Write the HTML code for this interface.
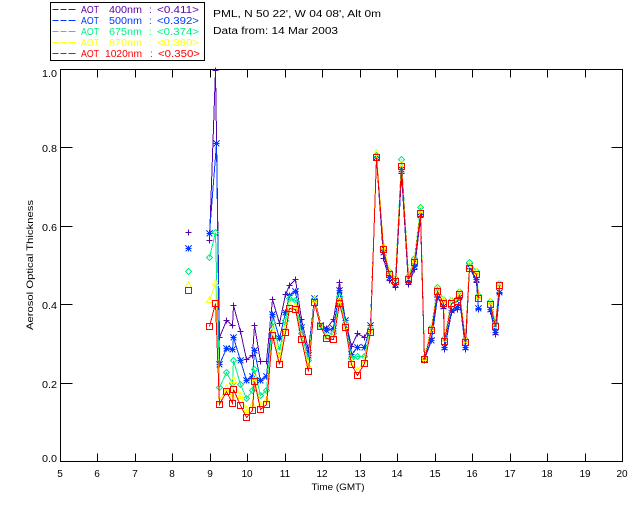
<!DOCTYPE html>
<html><head><meta charset="utf-8">
<style>
html,body{margin:0;padding:0;background:#fff}
svg{display:block;shape-rendering:crispEdges;font-family:"Liberation Sans",sans-serif;font-size:10px}
</style></head>
<body>
<svg width="640" height="512" viewBox="0 0 640 512" xmlns="http://www.w3.org/2000/svg">
<defs>
<marker id="mp" markerUnits="userSpaceOnUse" markerWidth="12" markerHeight="12" refX="6" refY="6" overflow="visible"><path d="M3 6H9M6 3V9" fill="none" stroke="#5a00a8" stroke-width="1"/></marker>
<marker id="mb" markerUnits="userSpaceOnUse" markerWidth="12" markerHeight="12" refX="6" refY="6" overflow="visible"><path d="M3 6H9M6 3V9M3 3L9 9M9 3L3 9" fill="none" stroke="#0038ff" stroke-width="1"/></marker>
<marker id="mg" markerUnits="userSpaceOnUse" markerWidth="12" markerHeight="12" refX="6" refY="6" overflow="visible"><path d="M6 3L9 6L6 9L3 6Z" fill="none" stroke="#00f088" stroke-width="1"/></marker>
<marker id="my" markerUnits="userSpaceOnUse" markerWidth="12" markerHeight="12" refX="6" refY="6" overflow="visible"><path d="M6 2L9 8H3Z" fill="none" stroke="#ffff00" stroke-width="1"/></marker>
<marker id="mr" markerUnits="userSpaceOnUse" markerWidth="12" markerHeight="12" refX="6" refY="6" overflow="visible"><rect x="3" y="3" width="6" height="6" fill="none" stroke="#ff0000" stroke-width="1"/></marker>
</defs>

<!-- legend -->
<g transform="translate(.5 .5)">
<rect x="50" y="2" width="154" height="58" fill="none" stroke="#000"/>
<path d="M52 9H58M60 9H66M68 9H75" stroke="#5a00a8"/>
<path d="M52 20H58M60 20H66M68 20H75" stroke="#0038ff"/>
<path d="M52 31H58M60 31H66M68 31H75" stroke="#00f088"/>
<path d="M52 42H58M60 42H66M68 42H75" stroke="#ffff00"/>
<path d="M52 53H58M60 53H66M68 53H75" stroke="#ff0000"/>
</g>
<g fill="#5a00a8"><text x="81" y="13" textLength="18" lengthAdjust="spacingAndGlyphs">AOT</text><text x="109" y="13" textLength="33" lengthAdjust="spacingAndGlyphs">400nm</text><text x="149" y="13">:</text><text x="157" y="13" textLength="42" lengthAdjust="spacingAndGlyphs">&lt;0.411&gt;</text></g>
<g fill="#0038ff"><text x="81" y="24" textLength="18" lengthAdjust="spacingAndGlyphs">AOT</text><text x="109" y="24" textLength="33" lengthAdjust="spacingAndGlyphs">500nm</text><text x="149" y="24">:</text><text x="157" y="24" textLength="42" lengthAdjust="spacingAndGlyphs">&lt;0.392&gt;</text></g>
<g fill="#00f088"><text x="81" y="35" textLength="18" lengthAdjust="spacingAndGlyphs">AOT</text><text x="109" y="35" textLength="33" lengthAdjust="spacingAndGlyphs">675nm</text><text x="149" y="35">:</text><text x="157" y="35" textLength="42" lengthAdjust="spacingAndGlyphs">&lt;0.374&gt;</text></g>
<g fill="#ffff00"><text x="81" y="46" textLength="18" lengthAdjust="spacingAndGlyphs">AOT</text><text x="109" y="46" textLength="33" lengthAdjust="spacingAndGlyphs">870nm</text><text x="149" y="46">:</text><text x="157" y="46" textLength="42" lengthAdjust="spacingAndGlyphs">&lt;0.360&gt;</text></g>
<g fill="#ff0000"><text x="81" y="57" textLength="18" lengthAdjust="spacingAndGlyphs">AOT</text><text x="105" y="57" textLength="37" lengthAdjust="spacingAndGlyphs">1020nm</text><text x="150" y="57">:</text><text x="158" y="57" textLength="42" lengthAdjust="spacingAndGlyphs">&lt;0.350&gt;</text></g>

<g fill="#000">
<text x="213" y="17" textLength="168" lengthAdjust="spacingAndGlyphs">PML, N 50 22', W 04 08', Alt 0m</text>
<text x="213" y="34" textLength="125" lengthAdjust="spacingAndGlyphs">Data from: 14 Mar 2003</text>
</g>

<!-- axes -->
<g transform="translate(.5 .5)" fill="none" stroke="#000">
<rect x="60" y="69" width="562" height="392"/>
<path d="M97 69V77M135 69V77M172 69V77M210 69V77M247 69V77M285 69V77M322 69V77M360 69V77M397 69V77M435 69V77M472 69V77M510 69V77M547 69V77M585 69V77"/>
<path d="M97 453V461M135 453V461M172 453V461M210 453V461M247 453V461M285 453V461M322 453V461M360 453V461M397 453V461M435 453V461M472 453V461M510 453V461M547 453V461M585 453V461"/>
<path d="M60 147H72M60 226H72M60 304H72M60 383H72M611 147H622M611 226H622M611 304H622M611 383H622"/>
</g>

<g fill="#000" text-anchor="end">
<text x="57" y="77" textLength="15" lengthAdjust="spacingAndGlyphs">1.0</text><text x="57" y="152" textLength="15" lengthAdjust="spacingAndGlyphs">0.8</text><text x="57" y="231" textLength="15" lengthAdjust="spacingAndGlyphs">0.6</text><text x="57" y="309" textLength="15" lengthAdjust="spacingAndGlyphs">0.4</text><text x="57" y="388" textLength="15" lengthAdjust="spacingAndGlyphs">0.2</text><text x="57" y="462" textLength="15" lengthAdjust="spacingAndGlyphs">0.0</text>
</g>
<g fill="#000" text-anchor="middle">
<text x="60" y="477">5</text><text x="97" y="477">6</text><text x="135" y="477">7</text><text x="172" y="477">8</text><text x="210" y="477">9</text><text x="247" y="477">10</text><text x="285" y="477">11</text><text x="322" y="477">12</text><text x="360" y="477">13</text><text x="397" y="477">14</text><text x="435" y="477">15</text><text x="472" y="477">16</text><text x="510" y="477">17</text><text x="547" y="477">18</text><text x="585" y="477">19</text><text x="622" y="477">20</text>
<text x="338" y="490" textLength="53" lengthAdjust="spacingAndGlyphs" font-size="9.5">Time (GMT)</text>
<text transform="translate(33 265) rotate(-90)" textLength="130" lengthAdjust="spacingAndGlyphs" font-size="9">Aerosol Optical Thickness</text>
</g>

<!-- data -->
<g transform="translate(.5 .5)" fill="none" stroke-width="1">
<g stroke="#5a00a8">
<polyline marker-start="url(#mp)" points="188,232 188,232"/>
<polyline marker-start="url(#mp)" marker-mid="url(#mp)" marker-end="url(#mp)" points="209,240 215,70 219,337 226,320 232,325 233,305 240,331 246,359 252,355 254,325 260,361 266,361 272,299 279,323 285,294 289,285 295,279 301,319 308,350 314,298 320,323 326,328 333,319 339,282 345,320 351,346 357,333 364,337 370,325 376,157 383,258 389,280 395,287 401,173 408,284 414,269 420,217 424,360 431,338 437,296 443,308 444,349 451,312 457,309 459,298 465,349 469,266 476,282 478,309"/>
<polyline marker-start="url(#mp)" marker-mid="url(#mp)" marker-end="url(#mp)" points="490,311 495,334 499,293"/>
</g>
<g stroke="#0038ff">
<polyline marker-start="url(#mb)" points="188,248 188,248"/>
<polyline marker-start="url(#mb)" marker-mid="url(#mb)" marker-end="url(#mb)" points="209,233 216,143 219,364 226,348 232,349 233,337 240,360 246,380 252,376 254,350 260,380 266,376 272,314 279,338 285,312 289,295 295,291 301,327 308,355 314,298 320,325 326,330 333,328 339,290 345,320 351,354 357,347 364,347 370,325 376,157 383,252 389,277 395,284 401,169 408,281 414,266 420,214 424,359 431,340 437,297 443,306 444,347 451,310 457,307 459,297 465,347 469,266 476,279 478,308"/>
<polyline marker-start="url(#mb)" marker-mid="url(#mb)" marker-end="url(#mb)" points="490,309 495,332 499,292"/>
</g>
<g stroke="#00f088">
<polyline marker-start="url(#mg)" points="188,271 188,271"/>
<polyline marker-start="url(#mg)" marker-mid="url(#mg)" marker-end="url(#mg)" points="209,257 215,232 219,387 226,372 232,383 233,360 240,384 246,398 252,390 254,369 260,395 266,390 272,322 279,350 285,320 289,298 295,300 301,333 308,360 314,300 320,325 326,336 333,333 339,296 345,323 351,358 357,356 364,356 370,328 376,155 383,247 389,271 395,278 401,159 408,276 414,258 420,207 424,357 431,327 437,287 443,299 444,338 451,300 457,298 459,291 465,339 469,262 476,271 478,295"/>
<polyline marker-start="url(#mg)" marker-mid="url(#mg)" marker-end="url(#mg)" points="490,301 495,323 499,283"/>
</g>
<g stroke="#ffff00">
<polyline marker-start="url(#my)" points="188,285 188,285"/>
<polyline marker-start="url(#my)" marker-mid="url(#my)" marker-end="url(#my)" points="209,300 215,283 219,400 226,388 232,397 233,380 240,396 246,410 252,405 254,378 260,405 266,400 272,330 279,358 285,328 289,305 295,306 301,337 308,366 314,300 320,325 326,337 333,337 339,300 345,326 351,362 357,370 364,360 370,330 376,153 383,246 389,272 395,279 401,164 408,277 414,260 420,210 424,358 431,328 437,289 443,300 444,339 451,301 457,299 459,292 465,340 469,265 476,272 478,296"/>
<polyline marker-start="url(#my)" marker-mid="url(#my)" marker-end="url(#my)" points="490,302 495,325 499,284"/>
</g>
<g stroke="#ff0000">
<polyline marker-start="url(#mr)" points="188,290 188,290"/>
<polyline marker-start="url(#mr)" marker-mid="url(#mr)" marker-end="url(#mr)" points="209,326 215,303 219,404 226,391 232,403 233,389 240,405 246,417 252,410 254,381 260,409 266,404 272,335 279,364 285,332 289,308 295,309 301,339 308,371 314,302 320,326 326,338 333,339 339,303 345,327 351,364 357,375 364,363 370,332 376,157 383,249 389,274 395,281 401,166 408,279 414,262 420,213 424,359 431,330 437,291 443,303 444,341 451,303 457,301 459,294 465,342 469,268 476,274 478,298"/>
<polyline marker-start="url(#mr)" marker-mid="url(#mr)" marker-end="url(#mr)" points="490,304 495,326 499,285"/>
</g>
</g>
</svg>
</body></html>
